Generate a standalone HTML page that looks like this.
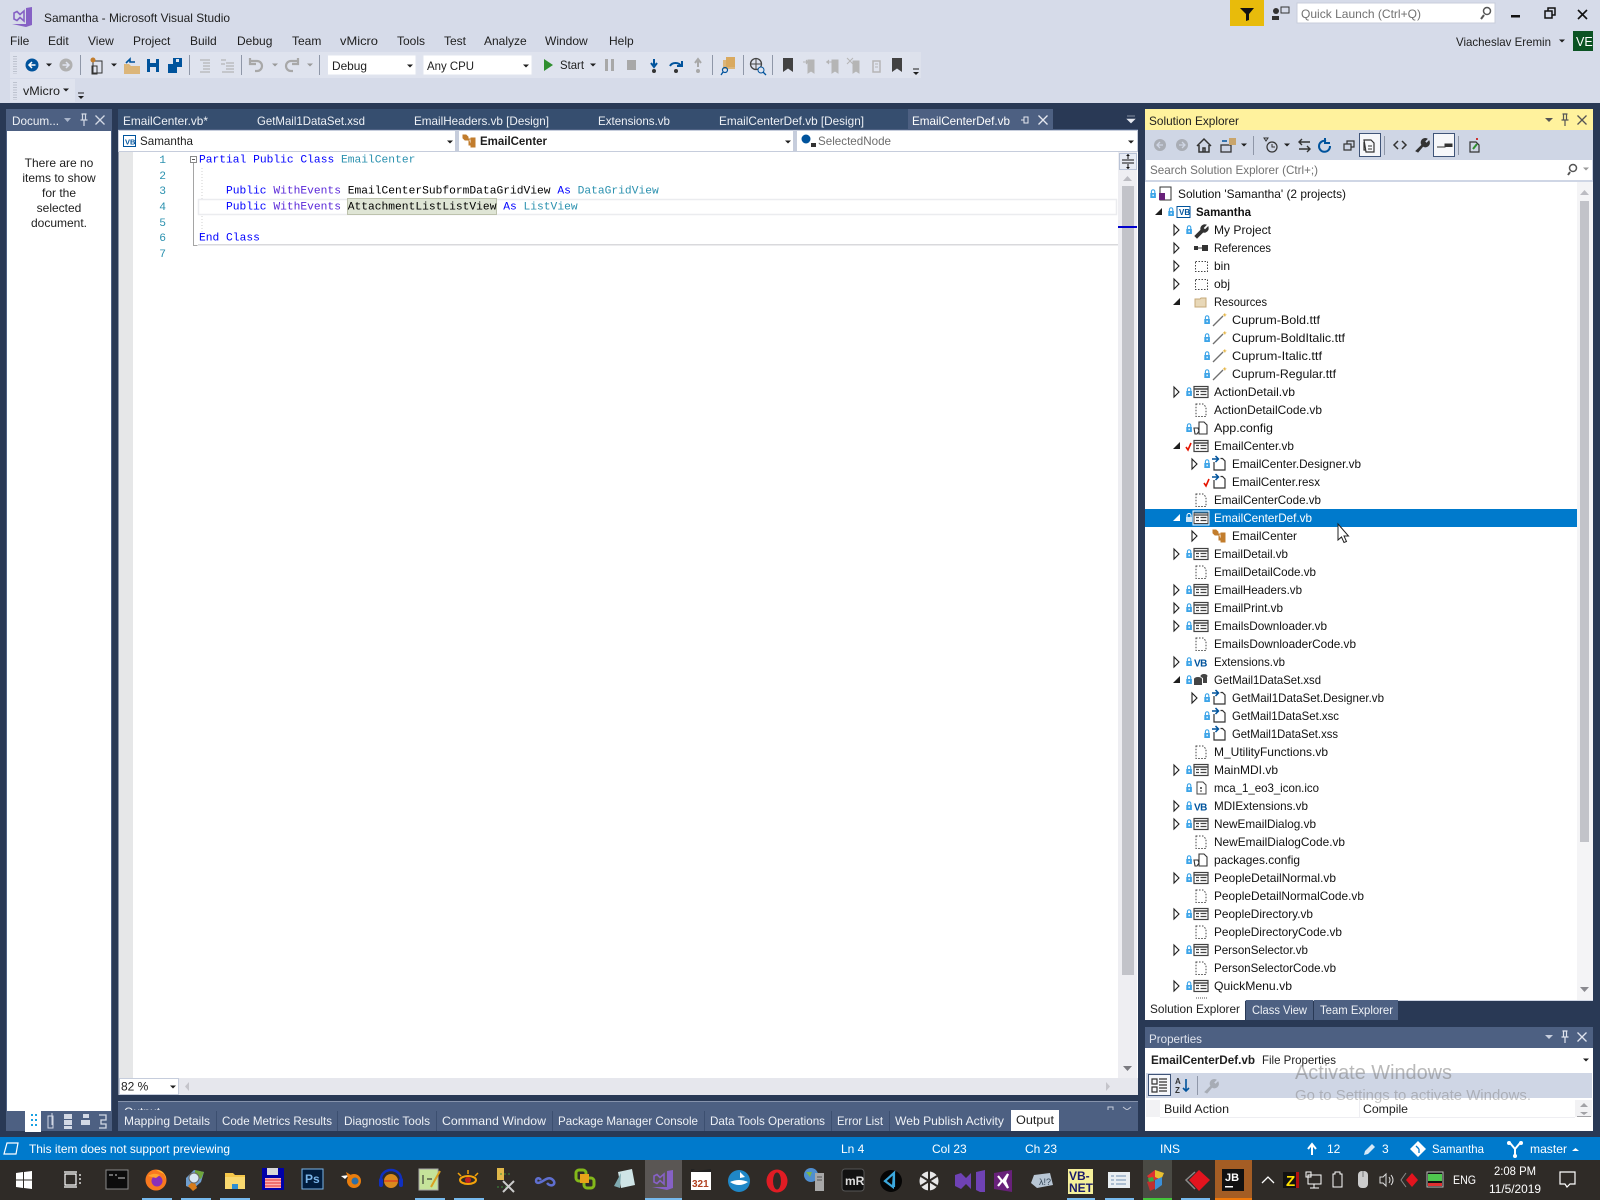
<!DOCTYPE html>
<html><head><meta charset="utf-8"><title>Samantha - Microsoft Visual Studio</title>
<style>
html,body{margin:0;padding:0;background:#293955;width:1600px;height:1200px;overflow:hidden}
svg{display:block;filter:blur(.3px)}
text{font-family:"Liberation Sans",sans-serif;font-size:12px;fill:#1e1e1e}
.w{fill:#fff}.t{fill:#eef1f6}
.c text,text.c{font-family:"Liberation Mono",monospace;font-size:11.27px}
.ln{font-family:"Liberation Mono",monospace;font-size:11.27px;fill:#2b91af;text-anchor:end}
.g{fill:#717171}
.tree text{font-size:12px;fill:#111}
</style></head><body>
<svg xmlns="http://www.w3.org/2000/svg" width="1600" height="1200" viewBox="0 0 1600 1200">
<defs>
<g id="lk"><path d="M-1.600 -1v-1.500a1.700 1.700 0 0 1 3.400 0v1.500" fill="none" stroke="#3ca4e8" stroke-width="1.100"/><rect x="-2.700" y="-1" width="5.600" height="5" fill="#3ca4e8"/><rect x="-.5" y=".6" width="1.300" height="1.600" fill="#fff"/></g>
<g id="ck"><path d="M-3 1l2 3 3-7" fill="none" stroke="#e51400" stroke-width="1.600"/></g>
<g id="fm"><rect x="-7" y="-5.500" width="14" height="11" fill="#fff" stroke="#424242" stroke-width="1.200"/><path d="M-7 -3h14" stroke="#424242" stroke-width="1.500"/><path d="M-5 -.5h3M-5 2.500h3M-.5 -.5h6M-.5 2.500h6" stroke="#424242" stroke-width="1.200"/></g>
<g id="fms"><rect x="-8" y="-7" width="16" height="14" fill="none" stroke="#fff" stroke-width="1"/><rect x="-7" y="-5" width="14" height="10.500" fill="#fff" stroke="#424242"/><path d="M-7 -3h14M-5 -.5h3M-5 2.500h3M-.5 -.5h6M-.5 2.500h6" stroke="#424242" stroke-width="1.200"/></g>
<path id="df" d="M-5 -6h7l3 3v9.500h-10z" fill="#fff" stroke="#444" stroke-width="1" stroke-dasharray="1.500 1.500"/>
<g id="cb"><path d="M-5 -2v8h11v-9l-2.500-2.500h-2" fill="none" stroke="#333" stroke-width="1.200"/><path d="M-7 -5h6M-3.500 -8l3 3-3 3" fill="none" stroke="#00539c" stroke-width="1.500"/></g>
<path id="tc" d="M-2 -5l5 5-5 5z" fill="#fff" stroke="#1e1e1e" stroke-width="1.100"/>
<path id="te" d="M3 -4v7h-7z" fill="#1e1e1e"/>
<g id="wd"><path d="M-6 6l10-10" stroke="#6f6f6f" stroke-width="1.300"/><path d="M5 -6l1 -1 .5 1.500 1.500 .3-1.500.7-.5 1.500-1-1.500-1.500-.3z" fill="#e6b84b"/></g>
<g id="vbf"><text x="-7" y="4.500" style="font-size:10px;font-weight:bold;fill:#00539c;letter-spacing:-.5px">VB</text></g>
<path id="dd" d="M-3 -1.500h6l-3 3z" fill="#1e1e1e"/>
<path id="ddg" d="M-3 -1.500h6l-3 3z" fill="#9a9a9a"/>
<g id="bk"><path d="M-5 -7h10v14l-5-3.500-5 3.500z"/></g>
<g id="ov"><path d="M-3 -4h6" stroke="#1e1e1e" stroke-width="1"/><path d="M-3 -1h6l-3 3z" fill="#1e1e1e"/></g>
<g id="pin"><path d="M-2.500 -6h5M-1.500 -6v6M1.500 -6v6M-3.500 0h7M0 0v6" stroke-width="1.200" fill="none"/></g>
<g id="xx"><path d="M-4.500 -4.500l9 9M4.500 -4.500l-9 9" stroke-width="1.300" fill="none"/></g>
<g id="clsi"><path d="M-6 -4h3l2 2v3h-3l-2-2zM2 -1h4v4h-4zM2 4h4v4h-4zM-1 0h3M0 0v6h2" fill="#c27d2d" stroke="#c27d2d"/></g>
</defs>

<!-- top chrome -->
<rect width="1600" height="103" fill="#d6dbe9"/>
<path d="M26 8l6-1v18l-6 2-14-3 14 0z" fill="#8661c5"/>
<path d="M14 13l3-1.500 3 3 4-3.500v10l-4-3.500-3 3-3-1.500z" fill="none" stroke="#8661c5" stroke-width="1.600"/>
<text x="44" y="22" textLength="186" lengthAdjust="spacingAndGlyphs">Samantha - Microsoft Visual Studio</text>
<g>
<text x="10" y="45">File</text><text x="48" y="45">Edit</text><text x="88" y="45">View</text><text x="133" y="45">Project</text><text x="190" y="45">Build</text><text x="237" y="45">Debug</text><text x="292" y="45">Team</text><text x="340" y="45" textLength="38" lengthAdjust="spacingAndGlyphs">vMicro</text><text x="397" y="45">Tools</text><text x="444" y="45">Test</text><text x="484" y="45">Analyze</text><text x="545" y="45">Window</text><text x="609" y="45">Help</text>
</g>
<!-- quick launch etc -->
<rect x="1230" y="0" width="34" height="26" fill="#e8bb0b"/>
<path d="M1240 8h14l-5 6v6l-3 1v-7z" fill="#111"/>
<circle cx="1276" cy="11" r="3" fill="#333"/><path d="M1272 20v-4h7v4z" fill="#333"/><rect x="1281" y="7" width="8" height="6" fill="none" stroke="#333"/>
<rect x="1297" y="3" width="198" height="20" fill="#fff" stroke="#c8cddb"/>
<text x="1301" y="18" class="g" textLength="120" lengthAdjust="spacingAndGlyphs">Quick Launch (Ctrl+Q)</text>
<circle cx="1487" cy="11" r="3.500" fill="none" stroke="#555" stroke-width="1.500"/><path d="M1484 15l-3 4" stroke="#555" stroke-width="2"/>
<rect x="1511" y="15" width="9" height="2.500" fill="#111"/>
<path d="M1545 11h7v7h-7zM1548 11v-3h7v7h-3" fill="none" stroke="#111" stroke-width="1.500"/>
<path d="M1578 10l9 9M1587 10l-9 9" stroke="#111" stroke-width="1.600"/>
<text x="1456" y="46" textLength="95" lengthAdjust="spacingAndGlyphs">Viacheslav Eremin</text>
<use href="#dd" x="1562" y="41"/>
<rect x="1573" y="31" width="20" height="20" fill="#0b5323"/><text x="1576" y="46" style="fill:#fff;font-size:12.500px">VE</text>

<!-- toolbar -->
<rect x="10" y="52" width="900" height="26" fill="#dfe3ee"/>
<rect x="910" y="52" width="11" height="26" fill="#dde1ec"/>
<use href="#ov" x="916" y="73"/>
<path d="M14 56v18M16 56v18" stroke="#9aa0ad" stroke-dasharray="1 1.500"/>
<circle cx="32" cy="65" r="6.500" fill="#00539c"/><path d="M35.500 65h-6M32 62l-3 3 3 3" fill="none" stroke="#fff" stroke-width="1.500"/>
<use href="#dd" x="49" y="65"/>
<circle cx="66" cy="65" r="6.500" fill="#b0b0b0"/><path d="M62.500 65h6M66 62l3 3-3 3" fill="none" stroke="#e0e4ef" stroke-width="1.500"/>
<rect x="80" y="55" width="1" height="20" fill="#8f97a8"/>
<path d="M93 61h9v12h-9zM92 66h5v8h-5z" fill="#e0e4ef" stroke="#333"/><circle cx="93" cy="60" r="2.500" fill="#c27d2d"/>
<use href="#dd" x="114" y="65"/>
<path d="M124 64h5l2 2h9v8h-16z" fill="#dcb67a"/><path d="M126 63l4-4 0 3h5" fill="none" stroke="#00539c" stroke-width="1.600"/>
<path d="M147 59h12v13h-12z" fill="#00539c"/><rect x="150" y="59" width="6" height="4" fill="#e0e4ef"/><rect x="150" y="67" width="6" height="5" fill="#e0e4ef"/>
<path d="M168 64h9v9h-9z" fill="#00539c"/><path d="M173 58h9v9h-5v-3h-4z" fill="#00539c"/><rect x="176" y="59" width="3" height="3" fill="#e0e4ef"/>
<rect x="189" y="55" width="1" height="20" fill="#8f97a8"/>
<path d="M200 60h10M203 63h7M203 66h7M203 69h7M200 72h10" stroke="#a8a8a8" stroke-width="1"/>
<path d="M221 60h5M226 63h8M226 66h8M226 69h8M222 72h12M221 64l4 0" stroke="#a8a8a8" stroke-width="1"/>
<rect x="241" y="55" width="1" height="20" fill="#8f97a8"/>
<path d="M250 61h7a5 5 0 1 1 0 10h-2M250 58v6h6" fill="none" stroke="#a8a8a8" stroke-width="2.200"/>
<use href="#ddg" x="275" y="65"/>
<path d="M298 61h-7a5 5 0 1 0 0 10h2M298 58v6h-6" fill="none" stroke="#a8a8a8" stroke-width="2.200"/>
<use href="#ddg" x="310" y="65"/>
<rect x="319" y="55" width="1" height="20" fill="#8f97a8"/>
<rect x="327.500" y="55" width="88.500" height="20" fill="#fff" stroke="#e0e4ef"/>
<text x="332" y="70" textLength="35" lengthAdjust="spacingAndGlyphs">Debug</text><use href="#dd" x="410" y="66"/>
<rect x="423" y="55" width="109" height="20" fill="#fff" stroke="#e0e4ef"/>
<text x="427" y="70" textLength="47" lengthAdjust="spacingAndGlyphs">Any CPU</text><use href="#dd" x="526" y="66"/>
<path d="M544 59l9 6-9 6z" fill="#2f8f2f"/>
<text x="560" y="69" textLength="24" lengthAdjust="spacingAndGlyphs">Start</text><use href="#dd" x="593" y="65"/>
<path d="M605 59h3v12h-3zM611 59h3v12h-3z" fill="#a8a8a8"/><rect x="627" y="60" width="9" height="10" fill="#a8a8a8"/>
<path d="M654 59v6M651 63l3 4 3-4" fill="none" stroke="#00539c" stroke-width="2"/><circle cx="654" cy="71" r="2" fill="#333"/>
<path d="M670 66a6 5 0 0 1 11 0M682 61v5h-5" fill="none" stroke="#00539c" stroke-width="2"/><circle cx="676" cy="71" r="2" fill="#333"/>
<path d="M698 67v-6M695 63l3-4 3 4" fill="none" stroke="#a8a8a8" stroke-width="2"/><circle cx="698" cy="71" r="2" fill="#a8a8a8"/>
<rect x="712" y="55" width="1" height="20" fill="#8f97a8"/>
<rect x="723" y="60" width="12" height="9" fill="#dcb67a"/><rect x="726" y="57" width="9" height="10" fill="#d9a95f"/><circle cx="725" cy="70" r="2.500" fill="none" stroke="#00539c" stroke-width="1.200"/><path d="M723 72l-2 3" stroke="#00539c" stroke-width="1.300"/>
<rect x="743" y="55" width="1" height="20" fill="#8f97a8"/>
<circle cx="756" cy="64" r="5.500" fill="none" stroke="#444" stroke-width="1.300"/><path d="M751 64h10M756 59v10" stroke="#444"/><circle cx="761" cy="70" r="3" fill="#e0e4ef" stroke="#00539c"/><path d="M763 72l3 3" stroke="#00539c" stroke-width="1.300"/>
<rect x="772" y="55" width="1" height="20" fill="#8f97a8"/>
<use href="#bk" x="788" y="65" fill="#424242"/>
<path d="M808 60h6v13l-3-2-3 2zM803 62h5M806 60l2 2-2 2" fill="#b5b5b5" stroke="#b5b5b5"/>
<path d="M832 60h6v13l-3-2-3 2zM826 62h6M829 60l-2 2 2 2" fill="#b5b5b5" stroke="#b5b5b5"/>
<path d="M853 61h6v12l-3-2-3 2zM847 58l6 6M853 58l-6 6" fill="#b5b5b5" stroke="#b5b5b5"/>
<path d="M873 61h7v11h-7z" fill="none" stroke="#b5b5b5" stroke-width="1.500"/><path d="M875 64h3M875 67h3" stroke="#b5b5b5"/>
<use href="#bk" x="897" y="65" fill="#424242"/>
<rect x="10" y="79" width="65" height="23" fill="#dfe3ee"/>
<path d="M14 82v18M16 82v18" stroke="#9aa0ad" stroke-dasharray="1 1.500"/>
<text x="23" y="95" textLength="37" lengthAdjust="spacingAndGlyphs">vMicro</text><use href="#dd" x="66" y="90"/>
<use href="#ov" x="81" y="97"/>

<!-- body dark -->
<rect y="103" width="1600" height="34" fill="#293955"/>

<!-- left panel -->
<rect x="6" y="109" width="106" height="1022" fill="#4d6082"/>
<rect x="7" y="131" width="104" height="980" fill="#fff"/>
<text x="12" y="125" class="t" textLength="47" lengthAdjust="spacingAndGlyphs">Docum...</text>
<path d="M64 118h7l-3.500 4z" fill="#a9b5cb"/><use href="#pin" x="84" y="120" stroke="#d3d9e5"/><use href="#xx" x="100" y="120" stroke="#d3d9e5"/>
<text x="59" y="167" text-anchor="middle">There are no</text><text x="59" y="182" text-anchor="middle">items to show</text><text x="59" y="197" text-anchor="middle">for the</text><text x="59" y="212" text-anchor="middle">selected</text><text x="59" y="227" text-anchor="middle">document.</text>
<rect x="25" y="1111" width="16" height="21" fill="#fff"/>
<path d="M31 1115h3M35 1115h2M31 1120h3M35 1120h2M31 1125h3M35 1125h2" stroke="#1ba1e2" stroke-width="2" stroke-dasharray="2 1"/>
<path d="M48 1116h5v12h-5zM52 1113v12" fill="none" stroke="#d3d9e5"/>
<path d="M64 1114h8v5h-8zM64 1120h8v5h-8zM64 1126h8v3h-8z" fill="#d3d9e5"/>
<path d="M83 1114h6v4h-6zM81 1120h9v5h-9z" fill="#d3d9e5"/>
<path d="M99 1115h7v5h-5v4h5v4h-7" fill="none" stroke="#d3d9e5" stroke-width="1.300"/>

<!-- document well -->
<rect x="118" y="109" width="790" height="20" fill="#364e6f"/>
<rect x="908" y="109" width="145" height="20" fill="#4d6082"/>
<rect x="118" y="129" width="1020" height="2" fill="#4d6082"/>
<text x="123" y="125" class="t" textLength="85" lengthAdjust="spacingAndGlyphs">EmailCenter.vb*</text>
<text x="257" y="125" class="t" textLength="108" lengthAdjust="spacingAndGlyphs">GetMail1DataSet.xsd</text>
<text x="414" y="125" class="t" textLength="135" lengthAdjust="spacingAndGlyphs">EmailHeaders.vb [Design]</text>
<text x="598" y="125" class="t" textLength="72" lengthAdjust="spacingAndGlyphs">Extensions.vb</text>
<text x="719" y="125" class="t" textLength="145" lengthAdjust="spacingAndGlyphs">EmailCenterDef.vb [Design]</text>
<text x="912" y="125" class="w" textLength="98" lengthAdjust="spacingAndGlyphs">EmailCenterDef.vb</text>
<path d="M1021 120h3M1024 117h4v6h-4z" stroke="#e6e9f0" fill="none"/>
<use href="#xx" x="1043" y="120" stroke="#e6e9f0"/>
<path d="M1127 116h8M1127 119h8l-4 4z" fill="#e6e9f0" stroke="#e6e9f0" stroke-width=".6"/>

<rect x="118" y="130" width="1020" height="23" fill="#c6cddc"/>
<rect x="119" y="131" width="336" height="20" fill="#fff"/>
<rect x="459" y="131" width="334" height="20" fill="#fff"/>
<rect x="797" y="131" width="340" height="20" fill="#fff"/>
<rect x="123.500" y="135.500" width="12" height="11" fill="#fff" stroke="#00539c"/><text x="125" y="144.500" style="font-size:7.500px;font-weight:bold;fill:#00539c">VB</text>
<text x="140" y="145" textLength="53" lengthAdjust="spacingAndGlyphs">Samantha</text>
<use href="#dd" x="450" y="142"/>
<use href="#clsi" x="469" y="139"/>
<text x="480" y="145" style="font-weight:bold" textLength="67" lengthAdjust="spacingAndGlyphs">EmailCenter</text>
<use href="#dd" x="788" y="142"/>
<circle cx="806" cy="139" r="4.500" fill="#00539c"/><rect x="811" y="143" width="5" height="4" fill="#333"/>
<text x="818" y="145" style="fill:#6d6d6d" textLength="73" lengthAdjust="spacingAndGlyphs">SelectedNode</text>
<use href="#dd" x="1131" y="142"/>

<!-- editor -->
<rect x="118" y="152" width="1020" height="926" fill="#fff"/>
<rect x="119" y="152" width="14" height="926" fill="#e6e7e8"/>
<rect x="118" y="152" width="1" height="943" fill="#8a94a8"/>
<text class="ln" x="166" y="163">1</text><text class="ln" x="166" y="179">2</text><text class="ln" x="166" y="194">3</text><text class="ln" x="166" y="210">4</text><text class="ln" x="166" y="226">5</text><text class="ln" x="166" y="241">6</text><text class="ln" x="166" y="257">7</text>
<rect x="190.500" y="156.500" width="6" height="6" fill="#fff" stroke="#8a8a8a"/><path d="M192 159.500h3" stroke="#555"/>
<path d="M193.500 163v82.500h4" fill="none" stroke="#a5a5a5"/>
<path d="M202 168v72" stroke="#d0d0d0" stroke-dasharray="1 2"/>
<rect x="198.500" y="199.500" width="918" height="15" fill="#fff" stroke="#ebecef" stroke-width="1.500"/>
<rect x="198" y="244" width="920" height="1.500" fill="#d9d9dc"/>
<rect x="347.500" y="198.500" width="149" height="16" fill="#dfe5d5" stroke="#bdc2ad"/>
<g class="c">
<text class="c" x="199" y="162.500" xml:space="preserve"><tspan style="fill:#0000ff">Partial Public Class</tspan> <tspan style="fill:#2b91af">EmailCenter</tspan></text>
<text class="c" x="226" y="193.500" xml:space="preserve"><tspan style="fill:#0000ff">Public</tspan> <tspan style="fill:#5a28d8">WithEvents</tspan> <tspan style="fill:#000">EmailCenterSubformDataGridView</tspan> <tspan style="fill:#0000ff">As</tspan> <tspan style="fill:#2b91af">DataGridView</tspan></text>
<text class="c" x="226" y="209.500" xml:space="preserve"><tspan style="fill:#0000ff">Public</tspan> <tspan style="fill:#5a28d8">WithEvents</tspan> <tspan style="fill:#000">AttachmentListListView</tspan> <tspan style="fill:#0000ff">As</tspan> <tspan style="fill:#2b91af">ListView</tspan></text>
<text class="c" x="199" y="240.500" xml:space="preserve"><tspan style="fill:#0000ff">End Class</tspan></text>
</g>
<rect x="1118" y="152" width="19" height="926" fill="#eeeef2"/>
<rect x="1119.500" y="153.500" width="17" height="16" fill="#e8ecf4" stroke="#b9c3d6"/>
<path d="M1122 160h12M1122 163h12M1128 154v5M1128 164v5" stroke="#111"/><path d="M1126 156h4l-2-2zM1126 167h4l-2 2z" fill="#111"/>
<path d="M1123 181l4.500-5 4.500 5z" fill="#bcbcc2"/>
<rect x="1122" y="186" width="12" height="789" fill="#c2c3c9"/>
<rect x="1118" y="226" width="19" height="2" fill="#0000cd"/>
<path d="M1123 1066l4.500 5 4.500-5z" fill="#7a7a80"/>
<rect x="119" y="1078" width="1019" height="17" fill="#e6e7ed"/>
<rect x="119.500" y="1078.500" width="59" height="16" fill="#fff" stroke="#c6cddc"/>
<text x="121" y="1090.500">82 %</text><use href="#dd" x="173" y="1087"/>
<path d="M189 1082l-4 4.500 4 4.500z" fill="#c4c4ca"/><path d="M1106 1082l4 4.500-4 4.500z" fill="#c4c4ca"/>

<!-- output collapsed + tabs -->
<rect x="118" y="1101" width="1020" height="30" fill="#4d6082"/>
<rect x="118" y="1101" width="1020" height="1" fill="#8592ab"/>
<text x="124" y="1116" class="t">Output</text>
<path d="M1108 1107h5v4h-5zM1123 1107l4 3 4-3" fill="none" stroke="#c5cbd9"/>
<rect x="118" y="1110" width="1020" height="21" fill="#4d6082"/>
<rect x="118" y="1131" width="1020" height="6" fill="#293955"/>
<path d="M216.500 1111v20M337.500 1111v20M436.500 1111v20M552.500 1111v20M704.500 1111v20M831.500 1111v20M889.500 1111v20" stroke="#3c4f70"/>
<text x="124" y="1125" class="t" textLength="86" lengthAdjust="spacingAndGlyphs">Mapping Details</text>
<text x="222" y="1125" class="t" textLength="110" lengthAdjust="spacingAndGlyphs">Code Metrics Results</text>
<text x="344" y="1125" class="t" textLength="86" lengthAdjust="spacingAndGlyphs">Diagnostic Tools</text>
<text x="442" y="1125" class="t" textLength="104" lengthAdjust="spacingAndGlyphs">Command Window</text>
<text x="558" y="1125" class="t" textLength="140" lengthAdjust="spacingAndGlyphs">Package Manager Console</text>
<text x="710" y="1125" class="t" textLength="115" lengthAdjust="spacingAndGlyphs">Data Tools Operations</text>
<text x="837" y="1125" class="t" textLength="46" lengthAdjust="spacingAndGlyphs">Error List</text>
<text x="895" y="1125" class="t" textLength="109" lengthAdjust="spacingAndGlyphs">Web Publish Activity</text>
<rect x="1011" y="1110" width="48" height="21" fill="#fff"/>
<text x="1016" y="1124" textLength="38" lengthAdjust="spacingAndGlyphs">Output</text>

<!-- solution explorer -->
<rect x="1145" y="109" width="448" height="21" fill="#fff29d"/>
<rect x="1145" y="130" width="448" height="871" fill="#cfd6e5"/>
<text x="1149" y="125" textLength="90" lengthAdjust="spacingAndGlyphs">Solution Explorer</text>
<path d="M1545 118h8l-4 4z" fill="#555"/><use href="#pin" x="1565" y="120" stroke="#555"/><use href="#xx" x="1582" y="120" stroke="#555"/>
<circle cx="1160" cy="145" r="6" fill="#a9adb5"/><path d="M1163 145h-6M1160 142l-3 3 3 3" fill="none" stroke="#cfd6e5" stroke-width="1.300"/>
<circle cx="1182" cy="145" r="6" fill="#a9adb5"/><path d="M1179 145h6M1182 142l3 3-3 3" fill="none" stroke="#cfd6e5" stroke-width="1.300"/>
<path d="M1197 146l7-7 7 7M1199 145v7h10v-7M1203 152v-4h2v4" fill="none" stroke="#333" stroke-width="1.500"/>
<rect x="1221" y="145" width="10" height="7" fill="none" stroke="#333" stroke-width="1.300"/><rect x="1229" y="138" width="7" height="7" fill="#c9a56b"/><path d="M1222 141h5" stroke="#00539c" stroke-width="1.500"/><use href="#dd" x="1244" y="145"/>
<rect x="1253" y="136" width="1" height="19" fill="#8f97a8"/>
<circle cx="1272" cy="147" r="5" fill="none" stroke="#333" stroke-width="1.200"/><path d="M1272 144v3h3M1264 138h4l-2 3z" fill="none" stroke="#333"/>
<use href="#dd" x="1287" y="145"/>
<path d="M1299 142h11M1302 139l-3 3 3 3M1310 149h-11M1307 146l3 3-3 3" fill="none" stroke="#333" stroke-width="1.400"/>
<path d="M1326 141a5.500 5.500 0 1 0 4 5M1325 138v5h5" fill="none" stroke="#00539c" stroke-width="2"/>
<path d="M1344 144h7v6h-7zM1347 144v-3h7v6h-3" fill="none" stroke="#333" stroke-width="1.200"/>
<rect x="1359.500" y="133.500" width="21" height="23" fill="#f6f7fa" stroke="#3f5478"/>
<path d="M1364 140h7l3 3v9h-8zM1364 142v8h2" fill="none" stroke="#333" stroke-width="1.200"/><path d="M1368 146h4M1368 149h4" stroke="#333"/>
<rect x="1384" y="136" width="1" height="19" fill="#8f97a8"/>
<path d="M1398 141l-4 4 4 4M1402 141l4 4-4 4" fill="none" stroke="#333" stroke-width="1.500"/>
<path d="M1416 151l6-6a4 4 0 0 1 5-6l-2.500 2.500 2 2 2.500-2.500a4 4 0 0 1-6 5l-5 6z" fill="#333" stroke="#333"/>
<rect x="1433.500" y="133.500" width="21" height="23" fill="#f6f7fa" stroke="#3f5478"/>
<path d="M1437 147h8v-3h7v3" fill="#333" stroke="#333"/>
<rect x="1458" y="136" width="1" height="19" fill="#8f97a8"/>
<path d="M1470 142h6l3 3v7h-9z" fill="none" stroke="#333" stroke-width="1.200"/><path d="M1473 149l4-5" stroke="#2f8f2f" stroke-width="2"/><path d="M1476 139h2" stroke="#c33" stroke-width="2"/>
<rect x="1146" y="160" width="446" height="20" fill="#fff"/>
<text x="1150" y="174" class="g" textLength="168" lengthAdjust="spacingAndGlyphs">Search Solution Explorer (Ctrl+;)</text>
<circle cx="1573" cy="168" r="3.500" fill="none" stroke="#555" stroke-width="1.500"/><path d="M1570 172l-2 3" stroke="#555" stroke-width="2"/><use href="#ddg" x="1586" y="169"/>
<rect x="1145" y="182" width="448" height="818" fill="#fff"/>
<rect x="1577" y="182" width="16" height="818" fill="#f4f4f6"/>
<path d="M1580 195l4.500-5 4.500 5z" fill="#bcbcc2"/>
<rect x="1580" y="201" width="9" height="641" fill="#c2c3c9"/>
<path d="M1580 987l4.500 5 4.500-5z" fill="#8a8a90"/>
<rect x="1145" y="509" width="432" height="18" fill="#007acc"/>
<g class="tree">
<g transform="translate(0,194)"><use href="#lk" x="1153"/><rect x="1160" y="-7" width="11" height="13" fill="#fff" stroke="#333"/><path d="M1159 -1h6v7h-6z" fill="#68217a"/><text x="1178" y="4" textLength="168" lengthAdjust="spacingAndGlyphs">Solution 'Samantha' (2 projects)</text></g>
<g transform="translate(0,212)"><use href="#te" x="1159"/><use href="#lk" x="1171"/><rect x="1177" y="-5.500" width="13" height="11" fill="#fff" stroke="#00539c"/><text x="1179" y="3" style="font-size:8px;font-weight:bold;fill:#00539c">VB</text><text x="1196" y="4" style="font-weight:bold" textLength="55" lengthAdjust="spacingAndGlyphs">Samantha</text></g>
<g transform="translate(0,230)"><use href="#tc" x="1176"/><use href="#lk" x="1189"/><path d="M1195 6l6-6a4 4 0 0 1 5-5l-3 3 2 2 3-3a4 4 0 0 1-5 5l-6 6z" fill="#333" stroke="#333"/><text x="1214" y="4" textLength="57" lengthAdjust="spacingAndGlyphs">My Project</text></g>
<g transform="translate(0,248)"><use href="#tc" x="1176"/><rect x="1194" y="-2" width="4" height="4" fill="#333"/><path d="M1198 0h4" stroke="#333"/><rect x="1202" y="-3" width="6" height="6" fill="#333"/><text x="1214" y="4" textLength="57" lengthAdjust="spacingAndGlyphs">References</text></g>
<g transform="translate(0,266)"><use href="#tc" x="1176"/><rect x="1195.500" y="-4.500" width="12" height="10" fill="#fff" stroke="#444" stroke-dasharray="1.500 1.500"/><text x="1214" y="4" textLength="16" lengthAdjust="spacingAndGlyphs">bin</text></g>
<g transform="translate(0,284)"><use href="#tc" x="1176"/><rect x="1195.500" y="-4.500" width="12" height="10" fill="#fff" stroke="#444" stroke-dasharray="1.500 1.500"/><text x="1214" y="4" textLength="16" lengthAdjust="spacingAndGlyphs">obj</text></g>
<g transform="translate(0,302)"><use href="#te" x="1177"/><path d="M1195 -3h5l1-1h5v9h-11z" fill="#e8d8b8" stroke="#c6a978"/><text x="1214" y="4" textLength="53" lengthAdjust="spacingAndGlyphs">Resources</text></g>
<g transform="translate(0,320)"><use href="#lk" x="1207"/><use href="#wd" x="1219"/><text x="1232" y="4" textLength="88" lengthAdjust="spacingAndGlyphs">Cuprum-Bold.ttf</text></g>
<g transform="translate(0,338)"><use href="#lk" x="1207"/><use href="#wd" x="1219"/><text x="1232" y="4" textLength="113" lengthAdjust="spacingAndGlyphs">Cuprum-BoldItalic.ttf</text></g>
<g transform="translate(0,356)"><use href="#lk" x="1207"/><use href="#wd" x="1219"/><text x="1232" y="4" textLength="90" lengthAdjust="spacingAndGlyphs">Cuprum-Italic.ttf</text></g>
<g transform="translate(0,374)"><use href="#lk" x="1207"/><use href="#wd" x="1219"/><text x="1232" y="4" textLength="104" lengthAdjust="spacingAndGlyphs">Cuprum-Regular.ttf</text></g>
<g transform="translate(0,392)"><use href="#tc" x="1176"/><use href="#lk" x="1189"/><use href="#fm" x="1201"/><text x="1214" y="4" textLength="81" lengthAdjust="spacingAndGlyphs">ActionDetail.vb</text></g>
<g transform="translate(0,410)"><use href="#df" x="1201"/><text x="1214" y="4" textLength="108" lengthAdjust="spacingAndGlyphs">ActionDetailCode.vb</text></g>
<g transform="translate(0,428)"><use href="#lk" x="1189"/><path d="M1199 -6h5l3 3v9h-8zM1194 0h4l1 3-2 3h-2z" fill="#fff" stroke="#333" stroke-width="1.100"/><text x="1214" y="4" textLength="59" lengthAdjust="spacingAndGlyphs">App.config</text></g>
<g transform="translate(0,446)"><use href="#te" x="1177"/><use href="#ck" x="1189"/><use href="#fm" x="1201"/><text x="1214" y="4" textLength="80" lengthAdjust="spacingAndGlyphs">EmailCenter.vb</text></g>
<g transform="translate(0,464)"><use href="#tc" x="1194"/><use href="#lk" x="1207"/><use href="#cb" x="1219"/><text x="1232" y="4" textLength="129" lengthAdjust="spacingAndGlyphs">EmailCenter.Designer.vb</text></g>
<g transform="translate(0,482)"><use href="#ck" x="1207"/><use href="#cb" x="1219"/><text x="1232" y="4" textLength="88" lengthAdjust="spacingAndGlyphs">EmailCenter.resx</text></g>
<g transform="translate(0,500)"><use href="#df" x="1201"/><text x="1214" y="4" textLength="107" lengthAdjust="spacingAndGlyphs">EmailCenterCode.vb</text></g>
<g transform="translate(0,518)"><path d="M1180 -4v7h-7z" fill="#fff"/><path d="M1187 -1v-1.500a2 2 0 0 1 4 0v1.500" fill="none" stroke="#fff"/><rect x="1186" y="-1" width="6" height="5" fill="#cde6f7"/><use href="#fms" x="1201"/><text x="1214" y="4" style="fill:#fff" textLength="98" lengthAdjust="spacingAndGlyphs">EmailCenterDef.vb</text></g>
<g transform="translate(0,536)"><use href="#tc" x="1194"/><use href="#clsi" x="1219" y="-2"/><text x="1232" y="4" textLength="65" lengthAdjust="spacingAndGlyphs">EmailCenter</text></g>
<g transform="translate(0,554)"><use href="#tc" x="1176"/><use href="#lk" x="1189"/><use href="#fm" x="1201"/><text x="1214" y="4" textLength="74" lengthAdjust="spacingAndGlyphs">EmailDetail.vb</text></g>
<g transform="translate(0,572)"><use href="#df" x="1201"/><text x="1214" y="4" textLength="102" lengthAdjust="spacingAndGlyphs">EmailDetailCode.vb</text></g>
<g transform="translate(0,590)"><use href="#tc" x="1176"/><use href="#lk" x="1189"/><use href="#fm" x="1201"/><text x="1214" y="4" textLength="88" lengthAdjust="spacingAndGlyphs">EmailHeaders.vb</text></g>
<g transform="translate(0,608)"><use href="#tc" x="1176"/><use href="#lk" x="1189"/><use href="#fm" x="1201"/><text x="1214" y="4" textLength="69" lengthAdjust="spacingAndGlyphs">EmailPrint.vb</text></g>
<g transform="translate(0,626)"><use href="#tc" x="1176"/><use href="#lk" x="1189"/><use href="#fm" x="1201"/><text x="1214" y="4" textLength="113" lengthAdjust="spacingAndGlyphs">EmailsDownloader.vb</text></g>
<g transform="translate(0,644)"><use href="#df" x="1201"/><text x="1214" y="4" textLength="142" lengthAdjust="spacingAndGlyphs">EmailsDownloaderCode.vb</text></g>
<g transform="translate(0,662)"><use href="#tc" x="1176"/><use href="#lk" x="1189"/><use href="#vbf" x="1201"/><text x="1214" y="4" textLength="71" lengthAdjust="spacingAndGlyphs">Extensions.vb</text></g>
<g transform="translate(0,680)"><use href="#te" x="1177"/><use href="#lk" x="1189"/><ellipse cx="1198" cy="-1" rx="4" ry="2" fill="#444"/><rect x="1194" y="-1" width="8" height="6" fill="#444"/><ellipse cx="1204" cy="-4" rx="3.500" ry="2" fill="#444"/><rect x="1203" y="-4" width="4" height="7" fill="#444"/><text x="1214" y="4" textLength="107" lengthAdjust="spacingAndGlyphs">GetMail1DataSet.xsd</text></g>
<g transform="translate(0,698)"><use href="#tc" x="1194"/><use href="#lk" x="1207"/><use href="#cb" x="1219"/><text x="1232" y="4" textLength="152" lengthAdjust="spacingAndGlyphs">GetMail1DataSet.Designer.vb</text></g>
<g transform="translate(0,716)"><use href="#lk" x="1207"/><use href="#cb" x="1219"/><text x="1232" y="4" textLength="107" lengthAdjust="spacingAndGlyphs">GetMail1DataSet.xsc</text></g>
<g transform="translate(0,734)"><use href="#lk" x="1207"/><use href="#cb" x="1219"/><text x="1232" y="4" textLength="106" lengthAdjust="spacingAndGlyphs">GetMail1DataSet.xss</text></g>
<g transform="translate(0,752)"><use href="#df" x="1201"/><text x="1214" y="4" textLength="114" lengthAdjust="spacingAndGlyphs">M_UtilityFunctions.vb</text></g>
<g transform="translate(0,770)"><use href="#tc" x="1176"/><use href="#lk" x="1189"/><use href="#fm" x="1201"/><text x="1214" y="4" textLength="64" lengthAdjust="spacingAndGlyphs">MainMDI.vb</text></g>
<g transform="translate(0,788)"><use href="#lk" x="1189"/><path d="M1197 -6h6l3 3v9h-9z" fill="#fff" stroke="#444"/><path d="M1200 0h2M1201 -1v2M1200 3h2" stroke="#333"/><text x="1214" y="4" textLength="105" lengthAdjust="spacingAndGlyphs">mca_1_eo3_icon.ico</text></g>
<g transform="translate(0,806)"><use href="#tc" x="1176"/><use href="#lk" x="1189"/><use href="#vbf" x="1201"/><text x="1214" y="4" textLength="94" lengthAdjust="spacingAndGlyphs">MDIExtensions.vb</text></g>
<g transform="translate(0,824)"><use href="#tc" x="1176"/><use href="#lk" x="1189"/><use href="#fm" x="1201"/><text x="1214" y="4" textLength="102" lengthAdjust="spacingAndGlyphs">NewEmailDialog.vb</text></g>
<g transform="translate(0,842)"><use href="#df" x="1201"/><text x="1214" y="4" textLength="131" lengthAdjust="spacingAndGlyphs">NewEmailDialogCode.vb</text></g>
<g transform="translate(0,860)"><use href="#lk" x="1189"/><path d="M1199 -6h5l3 3v9h-8zM1194 0h4l1 3-2 3h-2z" fill="#fff" stroke="#333" stroke-width="1.100"/><text x="1214" y="4" textLength="86" lengthAdjust="spacingAndGlyphs">packages.config</text></g>
<g transform="translate(0,878)"><use href="#tc" x="1176"/><use href="#lk" x="1189"/><use href="#fm" x="1201"/><text x="1214" y="4" textLength="122" lengthAdjust="spacingAndGlyphs">PeopleDetailNormal.vb</text></g>
<g transform="translate(0,896)"><use href="#df" x="1201"/><text x="1214" y="4" textLength="150" lengthAdjust="spacingAndGlyphs">PeopleDetailNormalCode.vb</text></g>
<g transform="translate(0,914)"><use href="#tc" x="1176"/><use href="#lk" x="1189"/><use href="#fm" x="1201"/><text x="1214" y="4" textLength="99" lengthAdjust="spacingAndGlyphs">PeopleDirectory.vb</text></g>
<g transform="translate(0,932)"><use href="#df" x="1201"/><text x="1214" y="4" textLength="128" lengthAdjust="spacingAndGlyphs">PeopleDirectoryCode.vb</text></g>
<g transform="translate(0,950)"><use href="#tc" x="1176"/><use href="#lk" x="1189"/><use href="#fm" x="1201"/><text x="1214" y="4" textLength="94" lengthAdjust="spacingAndGlyphs">PersonSelector.vb</text></g>
<g transform="translate(0,968)"><use href="#df" x="1201"/><text x="1214" y="4" textLength="122" lengthAdjust="spacingAndGlyphs">PersonSelectorCode.vb</text></g>
<g transform="translate(0,986)"><use href="#tc" x="1176"/><use href="#lk" x="1189"/><use href="#fm" x="1201"/><text x="1214" y="4" textLength="78" lengthAdjust="spacingAndGlyphs">QuickMenu.vb</text></g>
<path d="M1196 998h11" stroke="#555" stroke-dasharray="1 1"/>
</g>
<!-- sol tabs -->
<rect x="1145" y="1000" width="100" height="20" fill="#fff"/>
<text x="1150" y="1013" textLength="90" lengthAdjust="spacingAndGlyphs">Solution Explorer</text>
<rect x="1246" y="1000" width="67" height="20" fill="#4d6082"/><text x="1252" y="1014" class="t" textLength="55" lengthAdjust="spacingAndGlyphs">Class View</text>
<rect x="1314" y="1000" width="84" height="20" fill="#4d6082"/><text x="1320" y="1014" class="t" textLength="73" lengthAdjust="spacingAndGlyphs">Team Explorer</text>
<!-- properties -->
<rect x="1145" y="1027" width="448" height="22" fill="#4d6082"/>
<rect x="1145" y="1048" width="448" height="83" fill="#fff"/>
<text x="1149" y="1043" style="fill:#e0e4ee" textLength="53" lengthAdjust="spacingAndGlyphs">Properties</text>
<path d="M1545 1035h8l-4 4z" fill="#c7cedd"/><use href="#pin" x="1565" y="1037" stroke="#e0e4ee"/><use href="#xx" x="1582" y="1037" stroke="#e0e4ee"/>
<text x="1151" y="1064" style="font-weight:bold" textLength="104" lengthAdjust="spacingAndGlyphs">EmailCenterDef.vb</text>
<text x="1262" y="1064" textLength="74" lengthAdjust="spacingAndGlyphs">File Properties</text>
<use href="#dd" x="1586" y="1060"/>
<rect x="1146" y="1073" width="446" height="25" fill="#cfd6e5"/>
<rect x="1148.500" y="1074.500" width="22" height="21" fill="#f6f7fa" stroke="#3f5478"/>
<path d="M1152 1079h5v5h-5zM1152 1087h5v5h-5zM1159 1079h8M1159 1082h8M1159 1085h8M1159 1088h8M1159 1091h8" fill="none" stroke="#333" stroke-width="1.200"/>
<text x="1175" y="1084" style="font-size:8px;font-weight:bold;fill:#333">A</text><text x="1175" y="1093" style="font-size:8px;font-weight:bold;fill:#333">Z</text>
<path d="M1186 1079v12M1183 1088l3 3 3-3" fill="none" stroke="#00539c" stroke-width="1.600"/>
<rect x="1197" y="1076" width="1" height="19" fill="#8f97a8"/>
<path d="M1205 1092l6-6a4 4 0 0 1 5-6l-2.500 2.500 2 2 2.500-2.500a4 4 0 0 1-6 5l-5 6z" fill="#a7acb5" stroke="#a7acb5"/>
<rect x="1146" y="1100" width="14" height="17" fill="#f2f2f4"/>
<path d="M1160 1117.500h415M1359.500 1100v17" stroke="#eeeef2"/>
<text x="1164" y="1113" textLength="65" lengthAdjust="spacingAndGlyphs">Build Action</text>
<text x="1363" y="1113" textLength="45" lengthAdjust="spacingAndGlyphs">Compile</text>
<rect x="1575" y="1100" width="17" height="17" fill="#f2f2f4"/>
<path d="M1580 1107l4-4 4 4zM1580 1112h8l-4 3z" fill="#a2a2a6"/>
<rect x="1577" y="1116" width="14" height="1" fill="#a2a2a6"/>
<text x="1295" y="1079" textLength="157" lengthAdjust="spacingAndGlyphs" style="font-size:20px;fill:#7f7f7f;fill-opacity:.55">Activate Windows</text>
<text x="1295" y="1100" textLength="236" lengthAdjust="spacingAndGlyphs" style="font-size:14.500px;fill:#7f7f7f;fill-opacity:.45">Go to Settings to activate Windows.</text>

<!-- status bar -->
<rect y="1137" width="1600" height="23" fill="#007acc"/>
<path d="M7 1143h11l-2 11h-12z" fill="none" stroke="#fff" stroke-width="1.200"/>
<g>
<text x="29" y="1153" class="w" textLength="201" lengthAdjust="spacingAndGlyphs">This item does not support previewing</text>
<text x="841" y="1153" class="w">Ln 4</text><text x="932" y="1153" class="w">Col 23</text><text x="1025" y="1153" class="w">Ch 23</text><text x="1160" y="1153" class="w">INS</text>
<path d="M1312 1155v-11M1308 1149l4-5 4 5" fill="none" stroke="#fff" stroke-width="2"/>
<text x="1327" y="1153" class="w">12</text>
<path d="M1364 1155l1-4 7-7 3 3-7 7z" fill="#d6e9f7"/>
<text x="1382" y="1153" class="w">3</text>
<path d="M1418 1141l8 8-8 8-8-8z" fill="#fff"/><path d="M1416 1146l3 3M1419 1149v4" stroke="#007acc" stroke-width="1.300"/>
<text x="1432" y="1153" class="w" textLength="52" lengthAdjust="spacingAndGlyphs">Samantha</text>
<path d="M1510 1143l5 6 5-6M1515 1149v7" fill="none" stroke="#fff" stroke-width="2"/><circle cx="1509" cy="1143" r="2" fill="#fff"/><circle cx="1521" cy="1143" r="2" fill="#fff"/><circle cx="1515" cy="1156" r="2" fill="#fff"/>
<text x="1530" y="1153" class="w" textLength="37" lengthAdjust="spacingAndGlyphs">master</text>
<path d="M1572 1151l3.500-3 3.500 3z" fill="#fff"/>
</g>

<!-- taskbar -->
<rect y="1160" width="1600" height="40" fill="#2f2b27"/>
<rect x="645" y="1160" width="37" height="40" fill="#5a5654"/>
<rect x="1143" y="1160" width="29" height="40" fill="#4a4a44"/>
<rect x="1215" y="1160" width="37" height="40" fill="#a45d24"/>
<g fill="#76b9ed">
<rect x="142" y="1198" width="30" height="2"/><rect x="181" y="1198" width="30" height="2"/><rect x="220" y="1198" width="30" height="2"/><rect x="415" y="1198" width="30" height="2"/><rect x="454" y="1198" width="30" height="2"/><rect x="645" y="1198" width="37" height="2"/><rect x="1067" y="1198" width="28" height="2"/><rect x="1105" y="1198" width="29" height="2"/><rect x="1181" y="1198" width="29" height="2"/>
</g>
<rect x="1143" y="1198" width="29" height="2" fill="#44c53a"/><rect x="1215" y="1198" width="37" height="2" fill="#f0790a"/>
<path d="M16 1173l7-1v7.500h-7zM24 1172l8-1v8.500h-8zM16 1180.500h7v7.500l-7-1zM24 1180.500h8v8.500l-8-1z" fill="#fff"/>
<path d="M65 1174h11v11h-11zM64 1172h13M64 1187h13M79 1175h2M79 1179h2M79 1183h2" fill="none" stroke="#fff" stroke-width="1.200"/>
<rect x="106" y="1170" width="22" height="19" fill="#0c0c0c" stroke="#888"/><path d="M109 1175h4M115 1175h2M118 1178h7" stroke="#ccc"/>
<circle cx="156" cy="1180" r="10.500" fill="#f8791f"/><path d="M156 1170c6 0 10 4 10 9l-2-5z" fill="#ffbd2e"/><circle cx="157" cy="1181" r="5.500" fill="#8a2fb8"/><path d="M148 1176q6-4 12-1l-4 3z" fill="#ffa52e"/>
<path d="M186 1178l8-8 10 2-3 10-8 7-7-3z" fill="#6f9fd0"/><path d="M195 1170l9 2-3 7-6-3z" fill="#6fa63b"/><path d="M188 1186l6-6 3 8-4 3z" fill="#d67c1c"/><circle cx="194" cy="1178" r="5" fill="#d8e8f5" stroke="#666"/>
<path d="M225 1173h8l2 2h10v14h-20z" fill="#f5c74a"/><rect x="225" y="1177" width="20" height="12" fill="#f9d96f"/><rect x="232" y="1184" width="6" height="5" fill="#2f8fd1"/>
<rect x="262" y="1168" width="22" height="22" fill="#0000a8"/><rect x="267" y="1168" width="11" height="7" fill="#d8d8d8"/><rect x="265" y="1178" width="16" height="10" fill="#ffb0b0"/><path d="M265 1180h16M265 1183h16M265 1186h16" stroke="#e03030"/>
<rect x="302" y="1169" width="21" height="20" fill="#001c3d" stroke="#7ab4e8"/><text x="305" y="1183" style="font-size:12px;font-weight:bold;fill:#7ab4e8">Ps</text>
<circle cx="354" cy="1181" r="7" fill="#e87d0d"/><circle cx="355" cy="1181" r="3.500" fill="#2d6ea6"/><path d="M341 1176l8-1-4 4z" fill="#fff"/><path d="M346 1172l8 5-6 1z" fill="#e87d0d"/>
<path d="M381 1184v-5a10 9 0 0 1 20 0v5" fill="none" stroke="#1030c0" stroke-width="2.500"/><circle cx="391" cy="1181" r="7" fill="#d98a1e"/><path d="M384 1181h14" stroke="#e02020"/><rect x="379" y="1178" width="4" height="9" rx="2" fill="#1030c0"/><rect x="399" y="1178" width="4" height="9" rx="2" fill="#1030c0"/>
<rect x="419" y="1169" width="19" height="21" fill="#c5e39a" stroke="#aaa"/><path d="M423 1175v9M427 1179h5" stroke="#222"/><path d="M431 1187l9-16" stroke="#d9a020" stroke-width="2"/>
<ellipse cx="468" cy="1180" rx="8" ry="4" fill="none" stroke="#f5a30a" stroke-width="2"/><circle cx="468" cy="1180" r="3" fill="#c02020"/><path d="M458 1173l3 3M468 1170v4M478 1173l-3 3" stroke="#f5a30a" stroke-width="1.500"/>
<rect x="497" y="1168" width="7" height="12" fill="#e0b84a"/><path d="M500 1174h10M497 1187h10" stroke="#3d8f3d" stroke-dasharray="2 2"/><path d="M503 1192l11-11M514 1192l-11-11" stroke="#ccc" stroke-width="2"/>
<path d="M541 1180c-5-6-8 6 0 2 4-2 8-6 12-2s-2 8-6 3" fill="none" stroke="#5f6fd0" stroke-width="2.500"/>
<rect x="576" y="1170" width="10" height="11" rx="3" fill="none" stroke="#83b81a" stroke-width="3"/><rect x="584" y="1178" width="10" height="10" rx="3" fill="none" stroke="#83b81a" stroke-width="3"/><rect x="580" y="1174" width="9" height="9" fill="#e8a31a"/>
<path d="M618 1172l14-3 3 16-14 3z" fill="#cfe4e6"/><path d="M614 1186l7-13-1 15z" fill="#7faab0"/>
<path d="M667 1171l6-1v18l-6 2-15-3 15 0z" fill="#8661c5"/>
<path d="M654 1176l3-1.500 3 3 4-3.500v10l-4-3.500-3 3-3-1.500z" fill="none" stroke="#8661c5" stroke-width="1.600"/>
<rect x="691" y="1172" width="20" height="18" fill="#fff"/><path d="M691 1172l20-3v3zM691 1172v-3h4" fill="#222"/><text x="692" y="1187" style="font-size:10px;font-weight:bold;fill:#b04020">321</text>
<circle cx="739" cy="1181" r="11" fill="#1f87c7"/><path d="M730 1182q9-4 18 0-9 6-18 0z" fill="#fff"/><path d="M740 1172l5 5-5 1z" fill="#fff"/>
<ellipse cx="777" cy="1181" rx="10.500" ry="11.500" fill="#e01c24"/><ellipse cx="777" cy="1181" rx="4" ry="8.500" fill="#2f2b27"/>
<circle cx="811" cy="1175" r="7" fill="#4f8fd0"/><path d="M806 1172l6 0-2 5z" fill="#7ab648"/><rect x="815" y="1173" width="9" height="18" fill="#a8a8a8"/><path d="M817 1177h5M817 1180h5" stroke="#555"/>
<rect x="842" y="1169" width="22" height="22" rx="3" fill="#111" stroke="#555"/><text x="845" y="1185" style="font-size:12px;font-weight:bold;fill:#ddd">mR</text>
<circle cx="891" cy="1181" r="11" fill="#050505"/><path d="M894 1173l-9 8 8 6zM894 1173v14" fill="none" stroke="#3ba7dc" stroke-width="2.200"/>
<circle cx="929" cy="1181" r="9.500" fill="#e8e8e8"/><path d="M921 1176l16 10M921 1186l16-10M929 1171v20" stroke="#2f2b27" stroke-width="2"/>
<path d="M985 1170v22l-5 0-4-2v-18zM955 1175l6-2 5 5 5-5v16l-5-5-5 5-6-3z" fill="#6f42b5"/>
<path d="M1012 1170v22l-18-3v-16z" fill="#68217a"/><path d="M998 1176l4 5-4 5M1008 1174l-5 7 5 7-3-7z" fill="none" stroke="#fff" stroke-width="2.200"/>
<path d="M1034 1175l16-2 3 12-16 3-6-5z" fill="#b8c6d4"/><text x="1039" y="1185" style="font-size:9px;fill:#345">λ!?</text>
<rect x="1068" y="1169" width="25" height="25" fill="#f5f09a"/>
<text x="1069" y="1180" style="font-size:12px;font-weight:bold;fill:#1a1a6a">VB-</text><text x="1069" y="1192" style="font-size:12px;font-weight:bold;fill:#1a1a6a">NET</text>
<rect x="1108" y="1172" width="22" height="16" fill="#e9eef2"/><path d="M1111 1176h3M1116 1176h10M1111 1180h3M1116 1180h10M1111 1184h3M1116 1184h10" stroke="#6f8fb0"/>
<path d="M1147 1176l8-6 5 7-8 5z" fill="#e03030"/><path d="M1155 1170l9 3-3 7-6-3z" fill="#e8c030"/><path d="M1147 1182l7-3 2 9-6 3z" fill="#c03030"/><path d="M1155 1180l7-3v8l-7 5z" fill="#3a90d8"/><path d="M1148 1178l5-1 1 4-5 1z" fill="#40a840"/>
<path d="M1195 1172l-9 8 9 9" fill="none" stroke="#8a8a8a" stroke-width="1.500"/><path d="M1199 1170l11 10-11 11-10-11z" fill="#e3141e"/>
<rect x="1222" y="1169" width="22" height="22" fill="#111"/><text x="1225" y="1181" style="font-size:11px;font-weight:bold;fill:#fff">JB</text><rect x="1225" y="1186" width="8" height="1.500" fill="#fff"/>
<path d="M1262 1183l6-6 6 6" fill="none" stroke="#fff" stroke-width="1.300"/>
<rect x="1283" y="1172" width="16" height="16" fill="#111"/><text x="1286" y="1186" style="font-size:15px;font-weight:bold;fill:#ffe000">Z</text><rect x="1296" y="1172" width="3" height="16" fill="#b01010"/>
<path d="M1308 1175h13v9h-13zM1314 1184v4M1310 1188h9M1306 1172h5v5h-5z" fill="none" stroke="#fff"/>
<path d="M1335 1172h5v2h2v13h-9v-13h2z" fill="none" stroke="#fff"/>
<rect x="1358" y="1171" width="10" height="17" rx="4" fill="#ccc"/><path d="M1363 1171v6" stroke="#777"/>
<path d="M1380 1177h3l3-3v12l-3-3h-3zM1389 1177q2 3 0 6M1391 1175q4 5 0 10" fill="none" stroke="#ddd"/>
<path d="M1406 1173l-5 7 5 7" fill="none" stroke="#8a8a8a"/><path d="M1412 1173l6 7-6 7-6-7z" fill="#e3141e"/>
<rect x="1427" y="1172" width="16" height="15" fill="#111" stroke="#bbb"/><rect x="1428" y="1174" width="14" height="7" fill="#4fc74f"/><rect x="1428" y="1183" width="14" height="3" fill="#e03030"/>
<text x="1453" y="1184" class="w" textLength="23" lengthAdjust="spacingAndGlyphs">ENG</text>
<text x="1515" y="1175" class="w" text-anchor="middle" textLength="42" lengthAdjust="spacingAndGlyphs">2:08 PM</text>
<text x="1515" y="1193" class="w" text-anchor="middle" textLength="52" lengthAdjust="spacingAndGlyphs">11/5/2019</text>
<path d="M1560 1172h15v12h-5l-3 3-2-3h-5z" fill="none" stroke="#fff" stroke-width="1.200"/>
<!-- cursor -->
<path d="M1338 524v16l3.500-3 2.500 5.500 2.500-1-2.500-5.500h4.500z" fill="#fff" stroke="#222" stroke-width="1"/>
</svg>
</body></html>
